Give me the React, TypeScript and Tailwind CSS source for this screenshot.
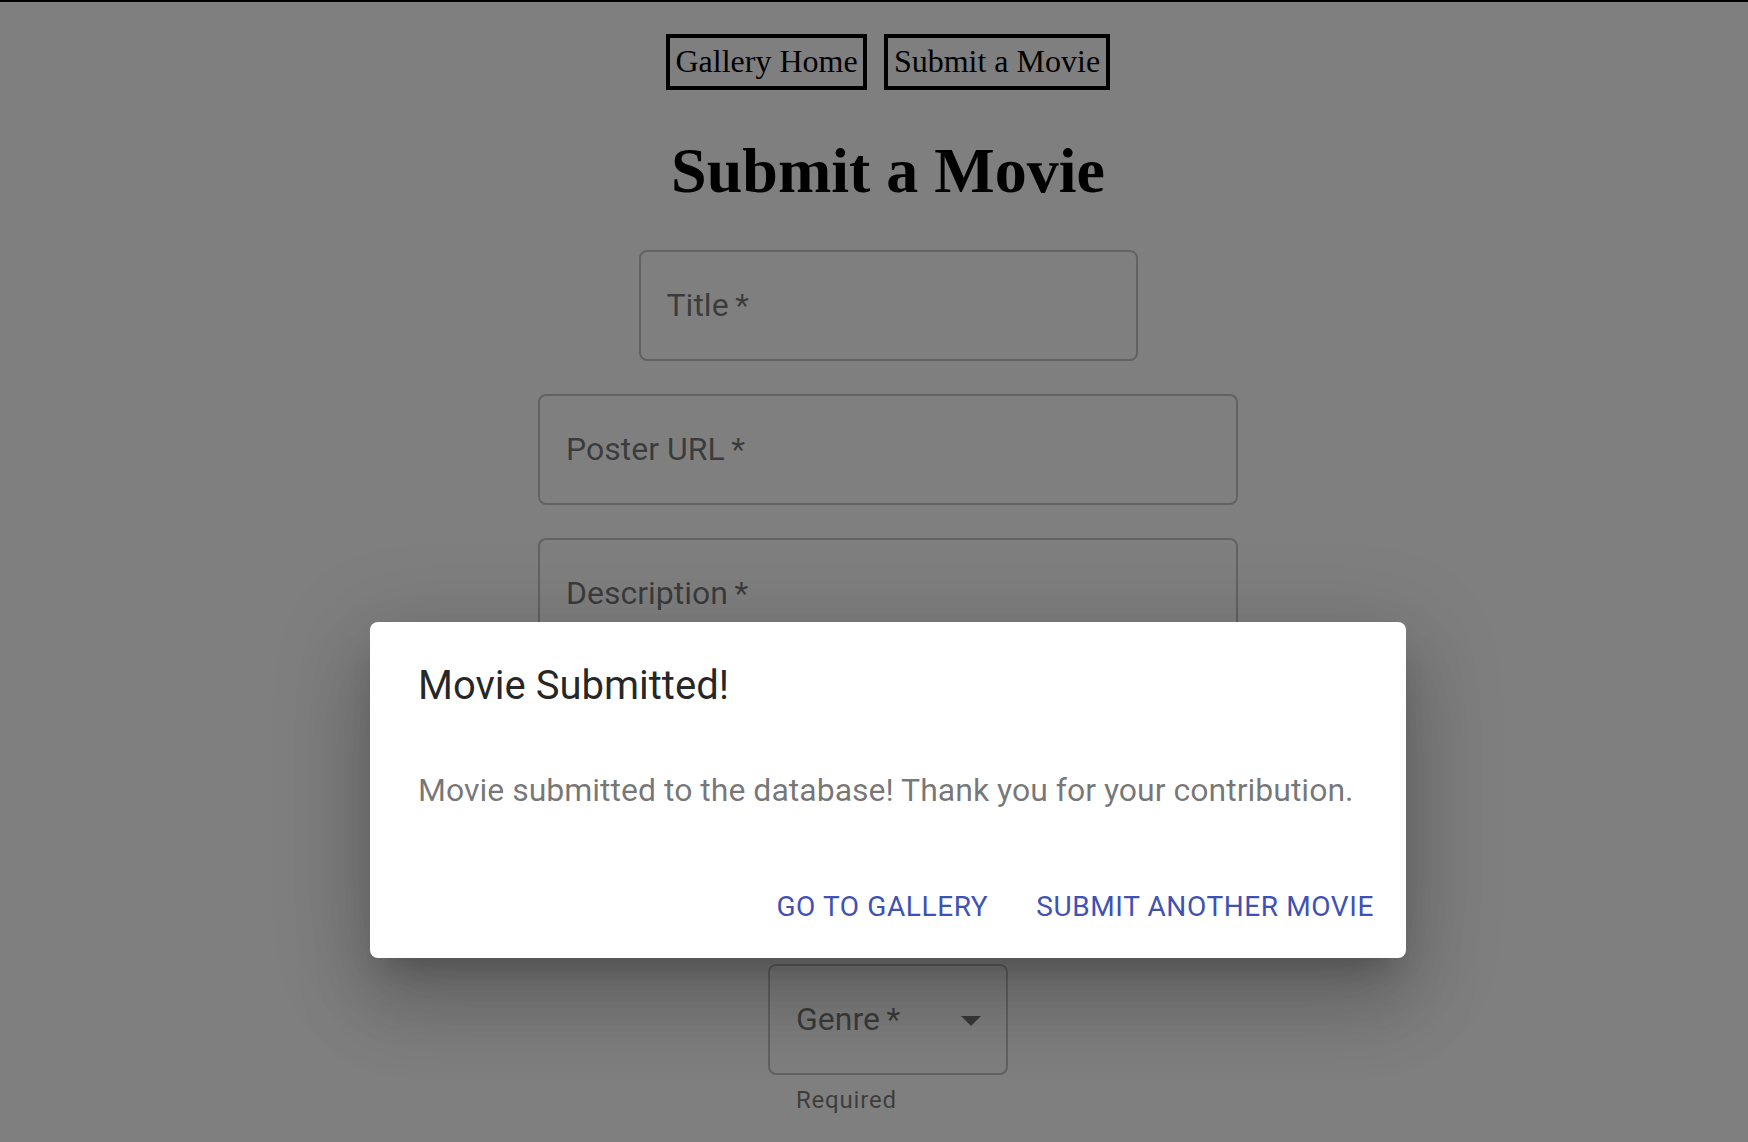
import React from "react";

const roboto = { fontFamily: "Roboto, 'Noto Sans', sans-serif" };

function Field({
  label,
  width,
  height = 112,
}: {
  label: string;
  width: string;
  height?: number;
}) {
  return (
    <div
      className={`${width} rounded-[8px] border-2 border-black/[0.23] pl-[26px] pt-[37px] box-border`}
      style={{ height }}
    >
      <div
        className="text-[32px] leading-[32px] text-black/[0.54]"
        style={roboto}
      >
        {label}
      </div>
    </div>
  );
}

export default function App() {
  return (
    <div className="relative w-[1748px] h-[1142px] overflow-hidden bg-white">
      <div className="h-[2px] bg-black" />
      <div className="w-[1776px] flex flex-col items-center">
        <div
          className="mt-[32px] flex gap-[17px]"
          style={{ fontFamily: "'Liberation Serif', 'Times New Roman', serif" }}
        >
          <button className="w-[201px] h-[56px] border-4 border-black bg-transparent text-[32px] text-black flex items-center justify-center pb-[2px]">
            Gallery Home
          </button>
          <button className="w-[226px] h-[56px] border-4 border-black bg-transparent text-[32px] text-black flex items-center justify-center pb-[2px]">
            Submit a Movie
          </button>
        </div>
        <h1
          className="mt-[45px] text-[64px] leading-[71px] font-bold text-black"
          style={{ fontFamily: "'Liberation Serif', 'Times New Roman', serif" }}
        >
          Submit a Movie
        </h1>
        <div className="mt-[44px]">
          <Field label={"Title\u2009*"} width="w-[499px]" height={111} />
        </div>
        <div className="mt-[33px]">
          <Field label={"Poster URL\u2009*"} width="w-[700px]" height={111} />
        </div>
        <div className="mt-[33px]">
          <Field label={"Description\u2009*"} width="w-[700px]" height={226} />
        </div>
        <div className="mt-[200px] flex flex-col">
          <div className="relative w-[240px] h-[111px] rounded-[8px] border-2 border-black/[0.23] pl-[26px] pt-[37px] box-border">
            <div
              className="text-[32px] leading-[32px] text-black/[0.54]"
              style={roboto}
            >
              {"Genre\u2009*"}
            </div>
            <svg
              viewBox="0 0 24 24"
              className="absolute right-[11px] top-1/2 -translate-y-1/2 w-[48px] h-[48px]"
            >
              <path d="M7 10l5 5 5-5z" fill="rgba(0,0,0,0.54)" />
            </svg>
          </div>
          <div
            className="mt-[5px] pl-[28px] text-[24px] leading-[40px] text-black/[0.54] tracking-[0.8px]"
            style={roboto}
          >
            Required
          </div>
        </div>
      </div>

      <div className="absolute inset-0 bg-black/50" />

      <div
        className="absolute left-[370px] top-[622px] w-[1036px] bg-white rounded-[8px] shadow-[0_22px_30px_-14px_rgba(0,0,0,0.2),0_48px_76px_6px_rgba(0,0,0,0.14),0_18px_92px_16px_rgba(0,0,0,0.12)] flex flex-col"
        style={roboto}
      >
        <div className="pt-[32px] pb-[32px] px-[48px] text-[40px] leading-[64px] text-black/[0.87] font-normal">
          Movie Submitted!
        </div>
        <div className="pt-[16px] pb-[16px] px-[48px]">
          <p className="mb-[24px] text-[32px] leading-[48px] text-black/[0.54] whitespace-nowrap">
            Movie submitted to the database! Thank you for your contribution.
          </p>
        </div>
        <div className="p-[16px] flex justify-end gap-[16px]">
          <button className="h-[72px] px-[16px] text-[28px] leading-[49px] tracking-[0.6px] uppercase text-[#3f51b5] font-normal">
            Go to Gallery
          </button>
          <button className="h-[72px] px-[16px] text-[28px] leading-[49px] tracking-[0.6px] uppercase text-[#3f51b5] font-normal">
            Submit Another Movie
          </button>
        </div>
      </div>
    </div>
  );
}
